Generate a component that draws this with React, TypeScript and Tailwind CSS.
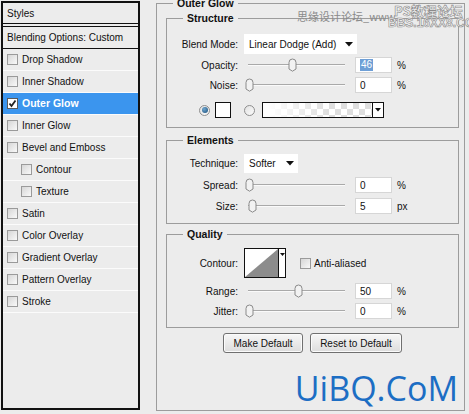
import React from "react";

function Box({ checked = false }: { checked?: boolean }) {
  if (checked)
    return (
      <span className="w-[11px] h-[11px] border border-[#5a5a5a] bg-white flex items-center justify-center shrink-0">
        <svg width="9" height="9" viewBox="0 0 9 9">
          <path d="M1.5 4.5 L3.5 7 L7.5 1.5" stroke="#222" strokeWidth="1.8" fill="none" />
        </svg>
      </span>
    );
  return (
    <span className="block w-[11px] h-[11px] border border-[#9a9a9a] bg-[linear-gradient(135deg,#d6d6d6,#f9f9f9)] shrink-0" />
  );
}

function Thumb({ x }: { x: number }) {
  return (
    <svg
      width="9"
      height="14"
      viewBox="0 0 9 14"
      className="absolute top-[1px]"
      style={{ left: x - 244 - 4.5 }}
    >
      <path
        d="M1 4.5 A3.5 3.5 0 0 1 8 4.5 L8 11 L4.5 13.2 L1 11 Z"
        fill="#f2f2f2"
        stroke="#8a8a8a"
        strokeWidth="1"
      />
    </svg>
  );
}

function Slider({ x }: { x: number }) {
  return (
    <div className="relative w-[106px] h-[16px] shrink-0">
      <div className="absolute left-[4px] right-[5px] top-[7px] h-[2px] border-t border-[#a9a9a9] border-b border-b-[#fafafa]" />
      <Thumb x={x} />
    </div>
  );
}

function Num({ v, sel = false }: { v: string; sel?: boolean }) {
  return (
    <div className="ml-[5px] w-[37px] h-[16px] bg-white border border-[#d6d6d6] flex items-center pl-[4px] shrink-0">
      {sel ? <span className="bg-[#6e9fd6] text-white px-[1px] leading-[12px]">{v}</span> : <span>{v}</span>}
    </div>
  );
}

function Label({ children }: { children: React.ReactNode }) {
  return <div className="w-[71px] text-right shrink-0">{children}</div>;
}

function SliderRow({ label, x, v, unit, sel = false }: { label: string; x: number; v: string; unit: string; sel?: boolean }) {
  return (
    <div className="flex items-center h-[16px]">
      <Label>{label}</Label>
      <div className="ml-[6px] flex items-center">
        <Slider x={x} />
        <Num v={v} sel={sel} />
        <span className="ml-[5px]">{unit}</span>
      </div>
    </div>
  );
}

function Arrow() {
  return (
    <svg width="8" height="5" viewBox="0 0 8 5" className="shrink-0">
      <path d="M0 0 L8 0 L4 4.5 Z" fill="#111" />
    </svg>
  );
}

function Radio({ on = false }: { on?: boolean }) {
  return (
    <span className="w-[11px] h-[11px] rounded-full border border-[#8e8e8e] bg-[linear-gradient(135deg,#e2e2e2,#fbfbfb)] flex items-center justify-center shrink-0">
      {on && <span className="w-[6px] h-[6px] rounded-full bg-[radial-gradient(circle_at_35%_35%,#6fa6cf,#1b4f7a)]" />}
    </span>
  );
}

function Group({ title, h, mt, children }: { title: string; h: string; mt: string; children: React.ReactNode }) {
  return (
    <fieldset className={`ml-[9px] w-[293px] border border-[#9c9c9c] ${h} ${mt}`}>
      <legend className="ml-[16px] px-[4px] font-bold leading-[13px] text-[10.5px]">{title}</legend>
      {children}
    </fieldset>
  );
}

const items: { label: string; indent?: boolean; sel?: boolean }[] = [
  { label: "Drop Shadow" },
  { label: "Inner Shadow" },
  { label: "Outer Glow", sel: true },
  { label: "Inner Glow" },
  { label: "Bevel and Emboss" },
  { label: "Contour", indent: true },
  { label: "Texture", indent: true },
  { label: "Satin" },
  { label: "Color Overlay" },
  { label: "Gradient Overlay" },
  { label: "Pattern Overlay" },
  { label: "Stroke" },
];

export default function App() {
  return (
    <div className="w-[469px] h-[414px] bg-[#ececec] flex items-start overflow-hidden relative font-['Liberation_Sans',Arial,sans-serif] text-[10px] text-[#111]">
      {/* Left styles list */}
      <div className="ml-[1px] mt-[1px] w-[139px] h-[409px] border-2 border-[#111] flex flex-col shrink-0">
        <div className="h-[20px] flex items-center pl-[4px]">Styles</div>
        <div className="h-[4px] border-y border-[#111]" />
        <div className="h-[21px] flex items-center pl-[4px]">Blending Options: Custom</div>
        <div className="h-px bg-[#111]" />
        {items.map((it) => (
          <React.Fragment key={it.label}>
            <div
              className={`h-[21px] flex items-center gap-[4px] ${it.indent ? "pl-[18px]" : "pl-[4px]"} ${
                it.sel ? "bg-[#3b95ee] text-white font-bold text-[10.5px]" : ""
              }`}
            >
              <Box checked={it.sel} />
              <span>{it.label}</span>
            </div>
            <div className="h-px bg-[#fbfbfb]" />
          </React.Fragment>
        ))}
      </div>

      {/* Right panel */}
      <fieldset className="ml-[16px] -mt-[2px] w-[309px] h-[413px] border border-[#9c9c9c] shrink-0">
        <legend className="ml-[16px] px-[4px] font-bold leading-[11px] text-[10.5px]">Outer Glow</legend>

        <Group title="Structure" h="h-[116px]" mt="mt-[3px]">
          <div className="pt-[9px]">
            <div className="flex items-center h-[20px]">
              <Label>Blend Mode:</Label>
              <div className="ml-[6px] w-[113px] h-[20px] bg-white flex items-center justify-between pl-[5px] pr-[4px]">
                <span>Linear Dodge (Add)</span>
                <Arrow />
              </div>
            </div>
            <div className="mt-[3px]">
              <SliderRow label="Opacity:" x={292} v="46" unit="%" sel />
            </div>
            <div className="mt-[4px]">
              <SliderRow label="Noise:" x={249} v="0" unit="%" />
            </div>
            <div className="mt-[9px] flex items-center h-[16px] pl-[32px]">
              <Radio on />
              <span className="ml-[5px] w-[16px] h-[16px] bg-white border border-[#111] shrink-0" />
              <span className="ml-[13px]">
                <Radio />
              </span>
              <div className="ml-[7px] flex h-[16px]">
                <span className="w-[111px] h-[16px] border border-[#111] [background:linear-gradient(to_right,#fff_5%,rgba(255,255,255,0)_60%),repeating-conic-gradient(#dedede_0_25%,#fff_0_50%)_0_0/12px_12px]" />
                <span className="w-[11px] h-[16px] border border-l-0 border-[#111] bg-white flex items-center justify-center">
                  <svg width="6" height="4" viewBox="0 0 6 4">
                    <path d="M0 0 L6 0 L3 3.5 Z" fill="#111" />
                  </svg>
                </span>
              </div>
            </div>
          </div>
        </Group>

        <Group title="Elements" h="h-[90px]" mt="mt-[6px]">
          <div className="pt-[7px]">
            <div className="flex items-center h-[19px]">
              <Label>Technique:</Label>
              <div className="ml-[6px] w-[54px] h-[19px] bg-white flex items-center justify-between pl-[5px] pr-[4px]">
                <span>Softer</span>
                <Arrow />
              </div>
            </div>
            <div className="mt-[4px]">
              <SliderRow label="Spread:" x={249} v="0" unit="%" />
            </div>
            <div className="mt-[5px]">
              <SliderRow label="Size:" x={252} v="5" unit="px" />
            </div>
          </div>
        </Group>

        <Group title="Quality" h="h-[100px]" mt="mt-[4px]">
          <div className="pt-[7px]">
            <div className="flex items-center h-[30px]">
              <Label>Contour:</Label>
              <div className="ml-[6px] flex h-[30px]">
                <span className="w-[35px] h-[30px] border border-[#111] bg-white">
                  <svg width="33" height="28" viewBox="0 0 33 28" className="block">
                    <path d="M0 28 L33 0 L33 28 Z" fill="#8c8c8c" />
                  </svg>
                </span>
                <span className="w-[7px] h-[30px] border border-l-0 border-[#111] bg-white flex justify-center pt-[4px]">
                  <svg width="5" height="3" viewBox="0 0 5 3">
                    <path d="M0 0 L5 0 L2.5 3 Z" fill="#111" />
                  </svg>
                </span>
              </div>
              <span className="ml-[14px]">
                <Box />
              </span>
              <span className="ml-[3px]">Anti-aliased</span>
            </div>
            <div className="mt-[5px]">
              <SliderRow label="Range:" x={298} v="50" unit="%" />
            </div>
            <div className="mt-[4px]">
              <SliderRow label="Jitter:" x={249} v="0" unit="%" />
            </div>
          </div>
        </Group>

        <div className="mt-[5px] flex pl-[66px] gap-[7px]">
          <button className="w-[80px] h-[20px] rounded-[3px] border border-[#707070] bg-[linear-gradient(#f7f7f7,#dcdcdc)] shadow-[inset_0_0_0_1px_#fbfbfb]">
            Make Default
          </button>
          <button className="w-[92px] h-[20px] rounded-[3px] border border-[#707070] bg-[linear-gradient(#f7f7f7,#dcdcdc)] shadow-[inset_0_0_0_1px_#fbfbfb]">
            Reset to Default
          </button>
        </div>

        <div className="mt-[18px] pr-[6px] text-right font-['Open_Sans',sans-serif] text-[34px] leading-[34px] text-[#1c6ec4]">
          UiBQ.CoM
        </div>
      </fieldset>

      {/* Watermarks */}
      <div className="absolute left-[297px] top-[10px] text-[11px] leading-[12px] text-[#8a8a8a] font-['Noto_Sans_CJK_SC',sans-serif] whitespace-nowrap">
        思缘设计论坛_www.
      </div>
      <div className="absolute left-[394px] top-[3px] text-[13px] leading-[15px] font-bold text-[#f2f2f2] [-webkit-text-stroke:0.6px_#8a8a8a] font-['Noto_Sans_CJK_SC',sans-serif] whitespace-nowrap">
        PS教程论坛
      </div>
      <div className="absolute left-[388px] top-[17px] text-[12px] leading-[12px] font-bold text-[#f2f2f2] [-webkit-text-stroke:0.6px_#8a8a8a] font-['Liberation_Sans',sans-serif] whitespace-nowrap">
        BBS.16XX8.COM
      </div>
    </div>
  );
}
